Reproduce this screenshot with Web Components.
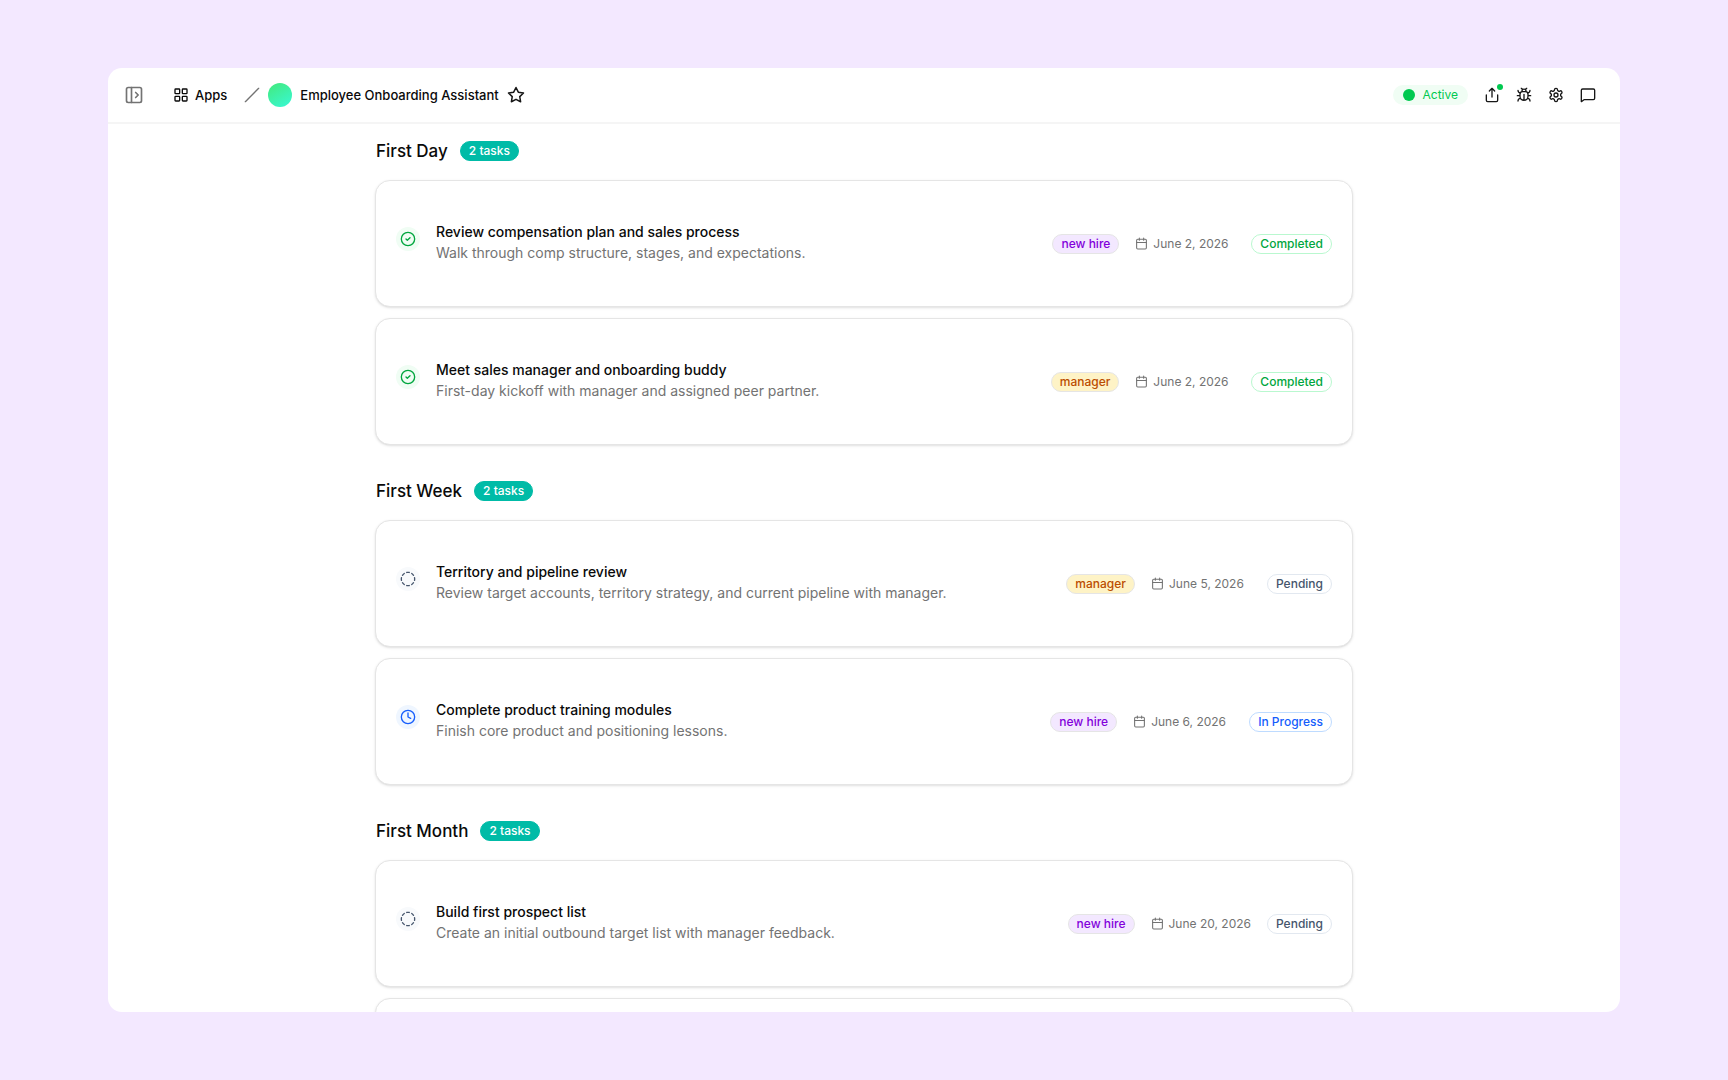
<!DOCTYPE html>
<html lang="en">
<head>
<meta charset="utf-8">
<meta name="viewport" content="width=device-width, initial-scale=1">
<title>Employee Onboarding Assistant</title>
<style>
  * { box-sizing: border-box; }

  body {
    --color-text: #0a0a0a;
    --color-muted: #737373;
    margin: 0;
    height: 100vh;
    padding: 68px 6.25vw;
    background: #f3e8ff;
    color: var(--color-text);
    font-family: Inter, "Liberation Sans", sans-serif;
    font-size: 14px;
    line-height: 20px;
  }
</style>
</head>
<body>
<app-window>
  <app-header slot="header" app-name="Employee Onboarding Assistant" status="Active"></app-header>

  <task-section heading="First Day" count="2 tasks">
    <task-card status="completed" owner="new hire" date="June 2, 2026">
      <span slot="title">Review compensation plan and sales process</span>
      <span slot="description">Walk through comp structure, stages, and expectations.</span>
    </task-card>
    <task-card status="completed" owner="manager" date="June 2, 2026">
      <span slot="title">Meet sales manager and onboarding buddy</span>
      <span slot="description">First-day kickoff with manager and assigned peer partner.</span>
    </task-card>
  </task-section>

  <task-section heading="First Week" count="2 tasks">
    <task-card status="pending" owner="manager" date="June 5, 2026">
      <span slot="title">Territory and pipeline review</span>
      <span slot="description">Review target accounts, territory strategy, and current pipeline with manager.</span>
    </task-card>
    <task-card status="progress" owner="new hire" date="June 6, 2026">
      <span slot="title">Complete product training modules</span>
      <span slot="description">Finish core product and positioning lessons.</span>
    </task-card>
  </task-section>

  <task-section heading="First Month" count="2 tasks">
    <task-card status="pending" owner="new hire" date="June 20, 2026">
      <span slot="title">Build first prospect list</span>
      <span slot="description">Create an initial outbound target list with manager feedback.</span>
    </task-card>
    <task-card></task-card>
  </task-section>
</app-window>

<script>
  const ICONS = {
    panel: '<rect x="3" y="3" width="18" height="18" rx="2"/><path d="M9 3v18M14 9l3 3-3 3"/>',
    grid: '<rect x="3" y="3" width="7" height="7" rx="1"/><rect x="14" y="3" width="7" height="7" rx="1"/><rect x="14" y="14" width="7" height="7" rx="1"/><rect x="3" y="14" width="7" height="7" rx="1"/>',
    slash: '<path d="M22 2 2 22"/>',
    star: '<path d="M12 2l3.09 6.26L22 9.27l-5 4.87 1.18 6.88L12 17.77l-6.18 3.25L7 14.14 2 9.27l6.91-1.01L12 2z"/>',
    share: '<path d="M3.500 12v8a2 2 0 0 0 2 2h13a2 2 0 0 0 2-2v-8M16 6l-4-4-4 4M12 2v13"/>',
    bug: '<path d="m8 2 1.880 1.880M14.120 3.880 16 2M9 7.130v-1a3 3 0 1 1 6 0v1M12 20c-3.300 0-6-2.700-6-6v-3a4 4 0 0 1 4-4h4a4 4 0 0 1 4 4v3c0 3.300-2.700 6-6 6M12 20v-9M6.530 9C4.600 8.800 3 7.100 3 5M6 13H2M3 21c0-2.100 1.700-3.900 3.800-4M20.970 5c0 2.100-1.600 3.800-3.500 4M22 13h-4M17.200 17c2.100.1 3.800 1.900 3.800 4"/>',
    gear: '<path d="M12.220 2h-.44a2 2 0 0 0-2 2v.18a2 2 0 0 1-1 1.730l-.43.25a2 2 0 0 1-2 0l-.15-.08a2 2 0 0 0-2.730.73l-.22.38a2 2 0 0 0 .73 2.730l.15.1a2 2 0 0 1 1 1.720v.51a2 2 0 0 1-1 1.740l-.15.09a2 2 0 0 0-.73 2.730l.22.38a2 2 0 0 0 2.730.73l.15-.08a2 2 0 0 1 2 0l.43.25a2 2 0 0 1 1 1.730V20a2 2 0 0 0 2 2h.44a2 2 0 0 0 2-2v-.18a2 2 0 0 1 1-1.730l.43-.25a2 2 0 0 1 2 0l.15.08a2 2 0 0 0 2.730-.73l.22-.39a2 2 0 0 0-.73-2.730l-.15-.08a2 2 0 0 1-1-1.740v-.5a2 2 0 0 1 1-1.740l.15-.09a2 2 0 0 0 .73-2.730l-.22-.38a2 2 0 0 0-2.730-.73l-.15.08a2 2 0 0 1-2 0l-.43-.25a2 2 0 0 1-1-1.730V4a2 2 0 0 0-2-2z"/><circle cx="12" cy="12" r="3"/>',
    message: '<path d="M22 17a2 2 0 0 1-2 2H6l-4 3V5a2 2 0 0 1 2-2h16a2 2 0 0 1 2 2z"/>',
    calendar: '<rect x="3" y="4" width="18" height="18" rx="2"/><path d="M8 2v4M16 2v4M3 10h18"/>',
    completed: '<circle cx="12" cy="12" r="10"/><path d="m9 12 2 2 4-4"/>',
    pending: '<path d="M10.100 2.182a10 10 0 0 1 3.800 0M13.900 21.818a10 10 0 0 1-3.800 0M17.609 3.721a10 10 0 0 1 2.690 2.700M2.182 13.900a10 10 0 0 1 0-3.800M20.279 17.609a10 10 0 0 1-2.700 2.690M21.818 10.100a10 10 0 0 1 0 3.800M3.721 6.391a10 10 0 0 1 2.700-2.690M6.391 20.279a10 10 0 0 1-2.690-2.700"/>',
    progress: '<circle cx="12" cy="12" r="10"/><path d="M12 6v6l4 2"/>',
  };

  const STATUS_LABELS = {
    completed: "Completed",
    pending: "Pending",
    progress: "In Progress",
  };

  function icon(name, size) {
    return `<svg width="${size}" height="${size}" viewBox="0 0 24 24" fill="none" stroke="currentColor" stroke-width="2" stroke-linecap="round" stroke-linejoin="round" aria-hidden="true">${ICONS[name]}</svg>`;
  }

  class AppWindow extends HTMLElement {
    constructor() {
      super();
      this.attachShadow({ mode: "open" }).innerHTML = `
        <style>
          :host {
            display: flex;
            flex-direction: column;
            height: 100%;
            overflow: hidden;
            background: #fff;
            border-radius: 14px;
          }

          main {
            flex: 1;
            min-height: 0;
            overflow-y: auto;
            scrollbar-width: none;
            padding: 13px 24px;
          }

          .column {
            display: flex;
            flex-direction: column;
            gap: 32px;
            max-width: 978px;
            margin: 0 auto;
          }
        </style>
        <slot name="header"></slot>
        <main><div class="column"><slot></slot></div></main>
      `;
    }
  }

  class AppHeader extends HTMLElement {
    connectedCallback() {
      this.attachShadow({ mode: "open" }).innerHTML = `
        <style>
          :host {
            display: block;
            flex: none;
          }

          header {
            display: flex;
            align-items: center;
            justify-content: space-between;
            height: 54px;
            padding: 0 24px 0 16px;
            border-bottom: 2px solid #f5f5f5;
            font-size: 13px;
            font-weight: 500;
          }

          svg { display: block; }

          nav, .actions, .apps, .status {
            display: flex;
            align-items: center;
          }

          nav { gap: 8px; }
          .actions { gap: 16px; }

          .apps {
            gap: 6px;
            padding: 0 9px 0 21px;
            color: inherit;
            text-decoration: none;
          }

          button {
            position: relative;
            padding: 0;
            border: 0;
            background: none;
            color: #171717;
            cursor: pointer;
          }

          .toggle, .slash { color: #737373; }

          .avatar {
            width: 24px;
            height: 24px;
            border-radius: 50%;
            background: linear-gradient(150deg, #43e97b, #38f9d7);
          }

          .status {
            gap: 8px;
            height: 20px;
            padding: 0 10px;
            border-radius: 10px;
            background: #f0fdf4;
            color: #00c950;
            font-size: 12px;
            font-weight: 400;
          }

          .status::before {
            content: "";
            width: 12px;
            height: 12px;
            border-radius: 50%;
            background: currentColor;
          }

          .notice {
            position: absolute;
            top: -3px;
            right: -3px;
            width: 6px;
            height: 6px;
            border-radius: 50%;
            background: #00c950;
          }
        </style>
        <header>
          <nav aria-label="Breadcrumb">
            <button class="toggle" aria-label="Toggle sidebar">${icon("panel", 20)}</button>
            <a class="apps" href="#">${icon("grid", 16)}Apps</a>
            <span class="slash">${icon("slash", 16)}</span>
            <span class="avatar"></span>
            <span>${this.getAttribute("app-name")}</span>
            <button aria-label="Favorite">${icon("star", 18)}</button>
          </nav>
          <div class="actions">
            <span class="status">${this.getAttribute("status")}</span>
            <button aria-label="Share">${icon("share", 16)}<span class="notice"></span></button>
            <button aria-label="Debug">${icon("bug", 16)}</button>
            <button aria-label="Settings">${icon("gear", 16)}</button>
            <button aria-label="Comments">${icon("message", 16)}</button>
          </div>
        </header>
      `;
    }
  }

  class StatusBadge extends HTMLElement {
    constructor() {
      super();
      this.attachShadow({ mode: "open" }).innerHTML = `
        <style>
          :host {
            display: inline-block;
            padding: 0 8px;
            border: 1px solid #e5e5e5;
            border-radius: 10px;
            font-size: 12px;
            font-weight: 500;
            line-height: 18px;
            white-space: nowrap;
          }

          :host([variant="count"]) { background: #00bba7; border-color: #00bba7; color: #fff; }
          :host([variant="new hire"]) { background: #f3e8ff; color: #8200db; }
          :host([variant="manager"]) { background: #fef3c6; color: #bb4d00; }
          :host([variant="completed"]) { border-color: #b9f8cf; color: #00a63e; }
          :host([variant="pending"]) { border-color: #e2e8f0; color: #45556c; }
          :host([variant="progress"]) { border-color: #bedbff; color: #155dfc; }
        </style>
        <slot></slot>
      `;
    }
  }

  class TaskSection extends HTMLElement {
    connectedCallback() {
      this.attachShadow({ mode: "open" }).innerHTML = `
        <style>
          :host { display: block; }

          .heading {
            display: flex;
            align-items: center;
            gap: 12px;
            height: 28px;
            margin-bottom: 15px;
            padding: 0 1px;
          }

          h2 {
            margin: 0;
            font-size: 17px;
            font-weight: 500;
            line-height: 28px;
          }

          .cards {
            display: flex;
            flex-direction: column;
            gap: 11px;
          }
        </style>
        <div class="heading">
          <h2>${this.getAttribute("heading")}</h2>
          <status-badge variant="count">${this.getAttribute("count")}</status-badge>
        </div>
        <div class="cards"><slot></slot></div>
      `;
    }
  }

  class TaskCard extends HTMLElement {
    connectedCallback() {
      this.attachShadow({ mode: "open" }).innerHTML = `
        <style>
          :host {
            display: flex;
            align-items: center;
            box-sizing: border-box;
            min-height: 127px;
            padding: 0 20px;
            background: #fff;
            border: 1px solid #e5e5e5;
            border-radius: 15px;
            box-shadow: 0 1px 3px rgba(0, 0, 0, 0.1), 0 1px 2px -1px rgba(0, 0, 0, 0.1);
          }

          svg { display: block; }

          .state {
            display: flex;
            align-items: center;
            justify-content: center;
            flex: none;
            width: 24px;
            height: 24px;
            margin: 0 16px 10px 0;
            border-radius: 50%;
          }

          .state--completed { background: #f0fdf4; color: #00a63e; }
          .state--pending { background: #f8fafc; color: #45556c; }
          .state--progress { background: #eff6ff; color: #155dfc; }

          .text {
            display: flex;
            flex: 1;
            flex-direction: column;
            margin-bottom: 4px;
            line-height: 21px;
          }

          .title { font-weight: 500; }
          .description { color: var(--color-muted); }

          .meta {
            display: flex;
            align-items: center;
            gap: 16px;
          }

          .date {
            display: flex;
            align-items: center;
            gap: 5px;
            min-width: 100px;
            color: var(--color-muted);
            font-size: 12px;
          }
        </style>
        ${this.renderTask()}
      `;
    }

    get status() {
      return this.getAttribute("status");
    }

    renderTask() {
      if (!this.status) return "";
      const owner = this.getAttribute("owner");
      return `
        <span class="state state--${this.status}">${icon(this.status, 16)}</span>
        <div class="text">
          <slot class="title" name="title"></slot>
          <slot class="description" name="description"></slot>
        </div>
        <div class="meta">
          <status-badge variant="${owner}">${owner}</status-badge>
          <span class="date">${icon("calendar", 13)}${this.getAttribute("date")}</span>
          <status-badge variant="${this.status}">${STATUS_LABELS[this.status]}</status-badge>
        </div>
      `;
    }
  }

  customElements.define("app-window", AppWindow);
  customElements.define("app-header", AppHeader);
  customElements.define("status-badge", StatusBadge);
  customElements.define("task-section", TaskSection);
  customElements.define("task-card", TaskCard);
</script>
</body>
</html>
